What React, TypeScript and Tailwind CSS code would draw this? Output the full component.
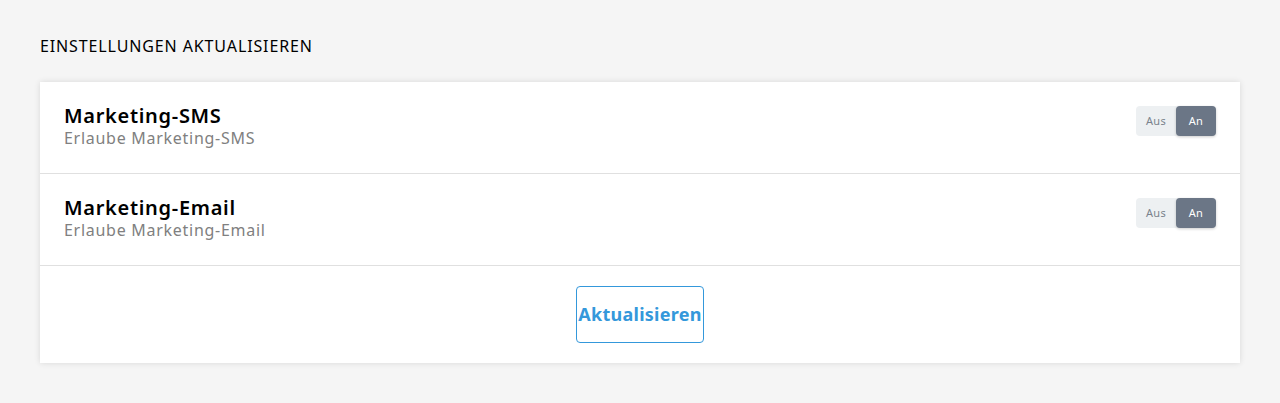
import { useState } from "react";

type Setting = {
  id: string;
  title: string;
  description: string;
};

const settings: Setting[] = [
  { id: "sms", title: "Marketing-SMS", description: "Erlaube Marketing-SMS" },
  { id: "email", title: "Marketing-Email", description: "Erlaube Marketing-Email" },
];

function Toggle({ on, onChange }: { on: boolean; onChange: (v: boolean) => void }) {
  return (
    <div className="flex h-[30px] w-[80px] rounded-[4px] bg-[#edf0f2] text-[11px] tracking-[0.03em]">
      <button
        onClick={() => onChange(false)}
        className={`flex-1 rounded-[4px] ${!on ? "bg-[#6b7686] text-white shadow-[0_1px_3px_rgba(0,0,0,0.2)]" : "text-[#7a828c]"}`}
      >
        Aus
      </button>
      <button
        onClick={() => onChange(true)}
        className={`flex-1 rounded-[4px] ${on ? "bg-[#6b7686] text-white shadow-[0_1px_3px_rgba(0,0,0,0.2)]" : "text-[#7a828c]"}`}
      >
        An
      </button>
    </div>
  );
}

export default function App() {
  const [values, setValues] = useState<Record<string, boolean>>({ sms: true, email: true });

  return (
    <div
      className="min-h-[403px] bg-[#f5f5f5] px-10 pt-[36px] text-black"
      style={{ fontFamily: '"Noto Sans", "DejaVu Sans", sans-serif' }}
    >
      <h2 className="text-[16px] leading-[20px] uppercase tracking-[0.055em]">
        Einstellungen aktualisieren
      </h2>

      <div className="mt-[26px] bg-white shadow-[0_0_6px_rgba(0,0,0,0.12)]">
        {settings.map((s) => (
          <div
            key={s.id}
            className="flex items-start justify-between border-b border-[#e0e0e0] px-6 pt-[22px] h-[92px]"
          >
            <div>
              <div className="text-[20px] leading-[24px] font-semibold tracking-[0.035em]">{s.title}</div>
              <div className="text-[16px] leading-[20px] text-[#808080] tracking-[0.045em]">
                {s.description}
              </div>
            </div>
            <div className="pt-[2px]">
              <Toggle
                on={values[s.id]}
                onChange={(v) => setValues((prev) => ({ ...prev, [s.id]: v }))}
              />
            </div>
          </div>
        ))}

        <div className="flex justify-center pt-[20px] pb-[20px]">
          <button className="h-[57px] w-[128px] rounded-[4px] border border-[#3498db] text-[18px] font-bold tracking-[0.015em] text-[#3498db]">
            Aktualisieren
          </button>
        </div>
      </div>
    </div>
  );
}
